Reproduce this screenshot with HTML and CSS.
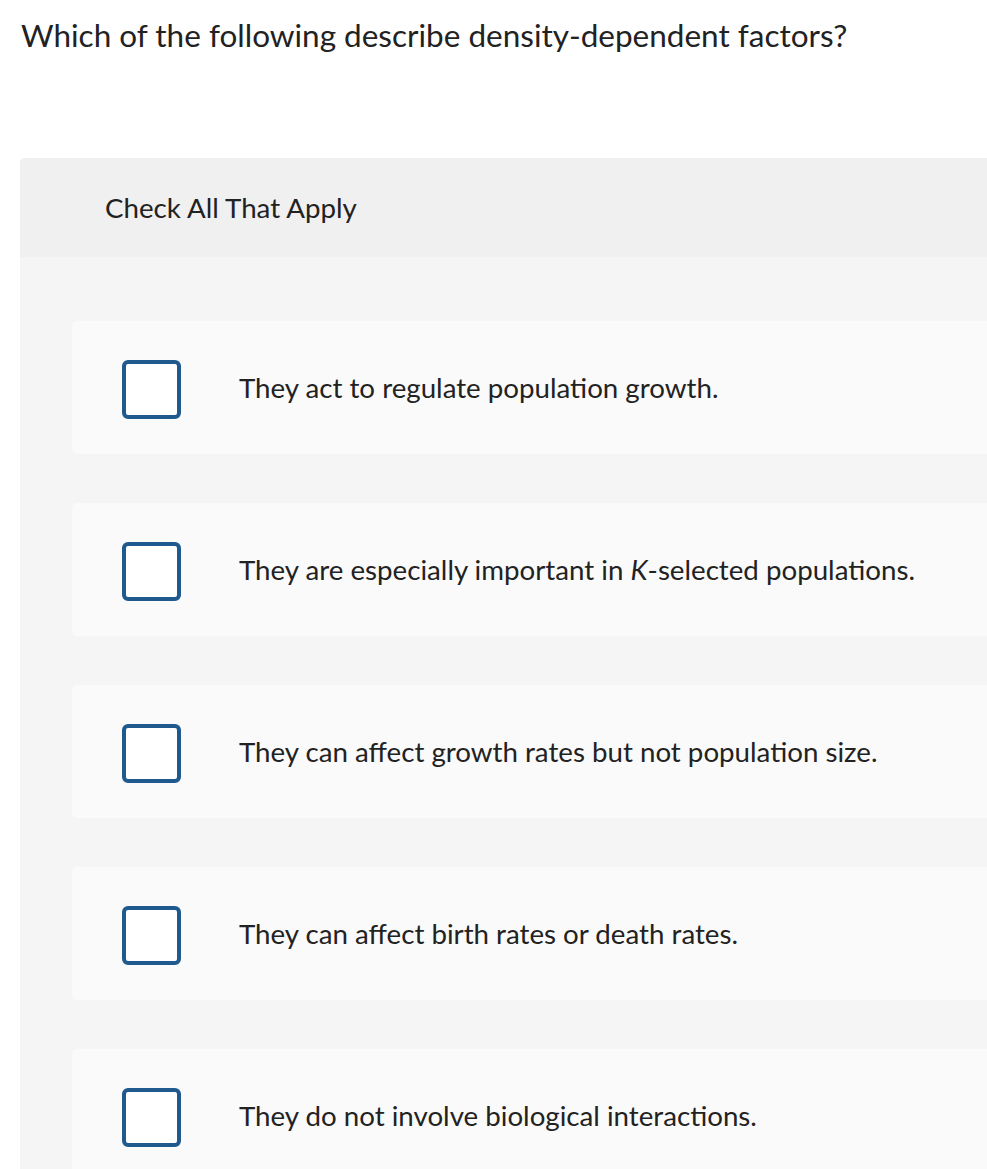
FILE: index.html
```html
<!DOCTYPE html>
<html lang="en">
<head>
<meta charset="utf-8">
<title>Check All That Apply</title>
<link rel="stylesheet" href="styles.css">
</head>
<body>
<h1 class="question">Which of the following describe density-dependent factors?</h1>
<section class="panel">
  <div class="panel-head">Check All That Apply</div>
  <div class="panel-body">
    <label class="option"><span class="box"></span><span class="label">They act to regulate population growth.</span></label>
    <label class="option"><span class="box"></span><span class="label">They are especially important in <i>K</i>-selected populations.</span></label>
    <label class="option"><span class="box"></span><span class="label">They can affect growth rates but not population size.</span></label>
    <label class="option"><span class="box"></span><span class="label">They can affect birth rates or death rates.</span></label>
    <label class="option"><span class="box"></span><span class="label">They do not involve biological interactions.</span></label>
  </div>
</section>
</body>
</html>
```

FILE: styles.css
```css
html, body {
  margin: 0;
  padding: 0;
  background: #ffffff;
  overflow: hidden;
}
body {
  font-family: Lato, "Noto Sans", "Liberation Sans", sans-serif;
  color: #222222;
}
.question {
  margin: 0;
  padding: 16px 0 0 21px;
  height: 158px;
  box-sizing: border-box;
  font-size: 31.5px;
  font-weight: 400;
  line-height: 38px;
}
.panel {
  margin-left: 20px;
  border-radius: 5px 0 0 0;
  background: #f5f5f5;
}
.panel-head {
  height: 99px;
  display: flex;
  align-items: center;
  padding-left: 85px;
  background: #f0f0f0;
  border-radius: 5px 0 0 0;
  font-size: 27.7px;
}
.panel-body {
  padding: 64px 0 40px 52px;
  display: flex;
  flex-direction: column;
  gap: 49px;
}
.option {
  height: 133px;
  display: flex;
  align-items: center;
  padding-left: 50px;
  background: #fafafa;
  border-radius: 5px 0 0 5px;
  font-size: 27.7px;
}
.box {
  width: 59px;
  height: 59px;
  box-sizing: border-box;
  border: 4px solid #1f5a8f;
  border-radius: 6px;
  background: #ffffff;
  margin-top: 4px;
  flex: none;
}
.label {
  margin-left: 58px;
}
```
